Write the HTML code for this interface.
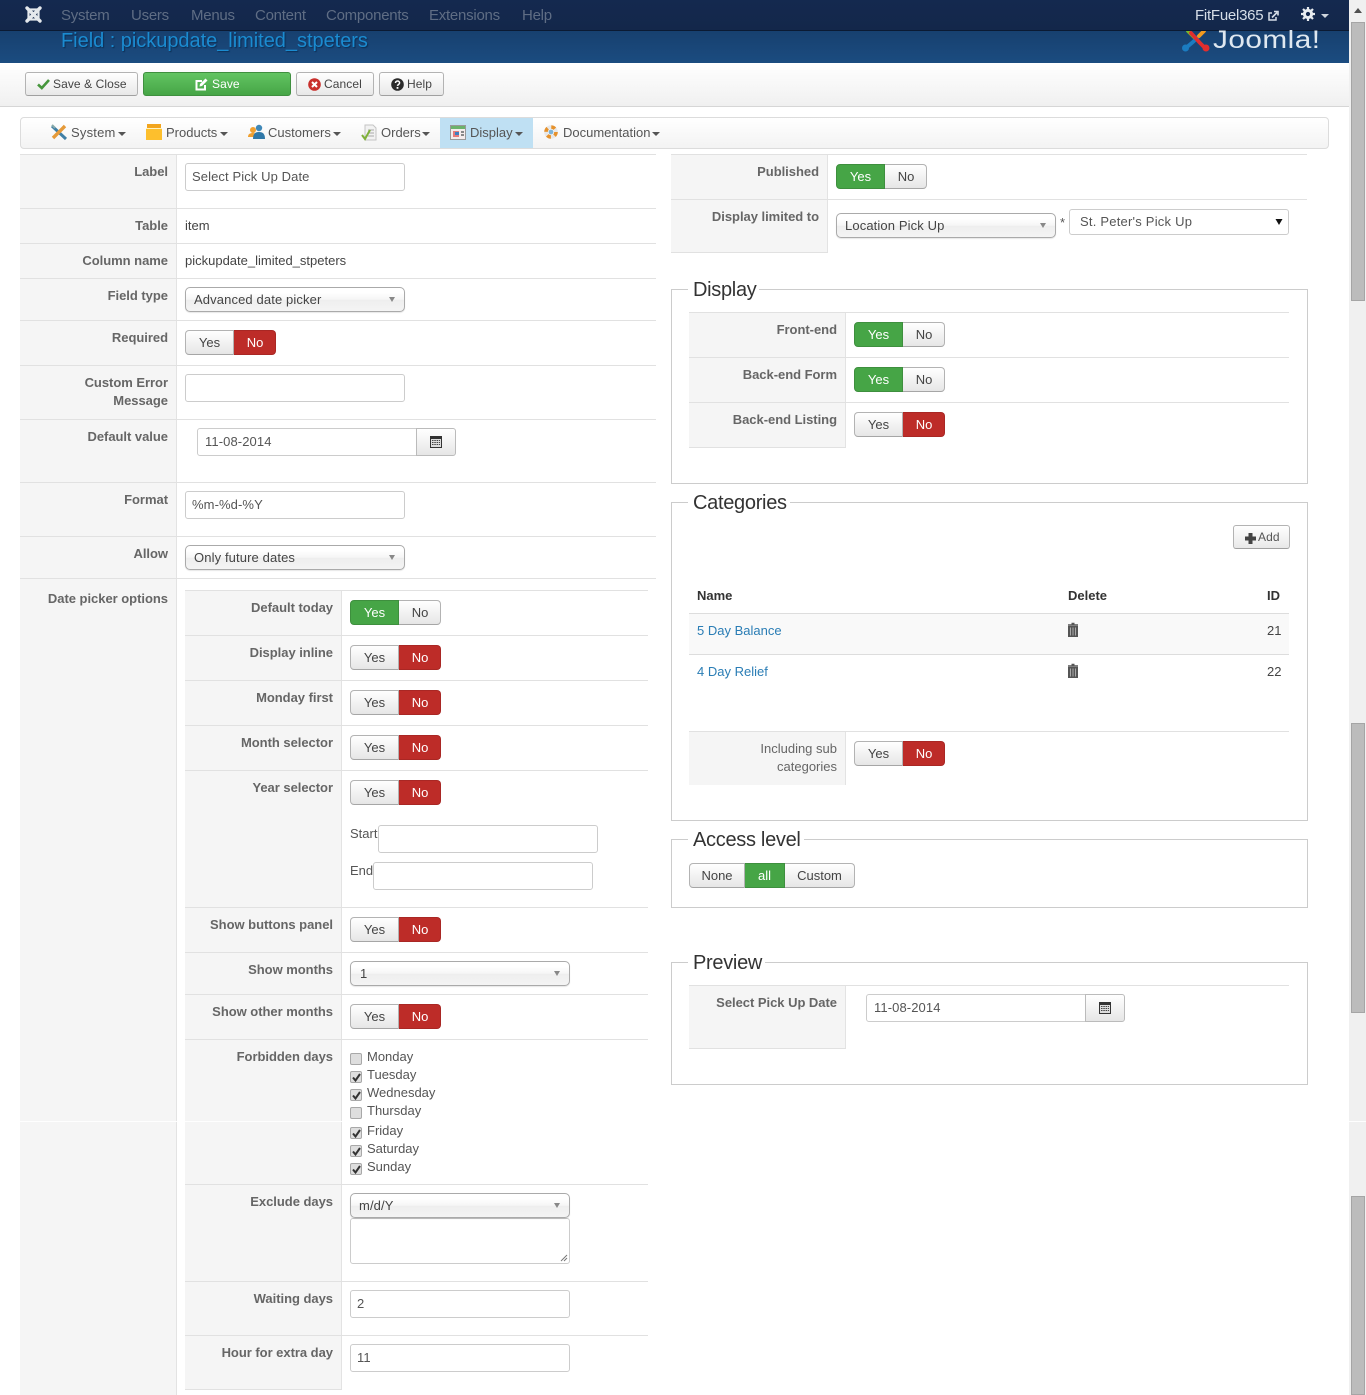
<!DOCTYPE html>
<html lang="en"><head><meta charset="utf-8"><title>Field : pickupdate_limited_stpeters</title>
<style>
html,body{margin:0;padding:0;background:#fff}
body{position:relative;width:1366px;height:1395px;overflow:hidden;font:13px/18px "Liberation Sans",Arial,sans-serif;color:#555}
div,span,svg{box-sizing:border-box}
.a{position:absolute}
.t{position:absolute;white-space:nowrap;line-height:18px;margin-top:1px}
.lb{position:absolute;text-align:right;font-weight:bold;color:#666;line-height:18px;white-space:nowrap;margin-top:1px;letter-spacing:-.03px}
.l1{left:20px;width:148px}.l2{left:185px;width:148px}.l3{left:671px;width:148px}.l4{left:689px;width:148px}
.hl{position:absolute;height:1px;background:#e1e1e1}
.side{position:absolute;background:#f5f5f5;border-right:1px solid #e3e3e3}
.in{position:absolute;height:28px;width:220px;background:#fff;border:1px solid #ccc;border-radius:3px;color:#555;padding:4px 6px;line-height:18px;white-space:nowrap;letter-spacing:.1px}
.sel{position:absolute;height:25px;width:220px;border:1px solid #aaa;border-radius:5px;background:linear-gradient(#fff 20%,#f6f6f6 50%,#eee 52%,#f4f4f4);color:#444;padding:3px 8px;line-height:18px;box-shadow:0 1px 1px rgba(0,0,0,.1);letter-spacing:.12px}
.sel:after{content:"";position:absolute;right:9px;top:9px;border:3px solid transparent;border-top:5px solid #888;border-bottom:0}
.bg{position:absolute;height:25px;display:flex}
.b{display:block;height:25px;line-height:23px;text-align:center;border:1px solid #b3b3b3;background:linear-gradient(#fff,#e6e6e6);color:#444;border-bottom-color:#a6a6a6}
.b:first-child{border-radius:4px 0 0 4px}.b:last-child{border-radius:0 4px 4px 0}
.b+.b{border-left:0}
.b.g{background:#46a546;color:#fff;border-color:#3e8f3e}
.b.r{background:#bd2c28;color:#fff;border-color:#a92724}
.w1{width:49px}.w2{width:42px;padding-left:1px}
.tb{position:absolute;top:72px;height:24px;font-size:12px;line-height:23px;color:#444;border:1px solid #b3b3b3;border-bottom-color:#a0a0a0;border-radius:3px;background:linear-gradient(#fff,#e8e8e8);letter-spacing:.08px}
.tb svg,.tb span{position:absolute}
.nav{position:absolute;top:7px;font-size:15px;line-height:18px;color:#5f6d84;white-space:nowrap;letter-spacing:-.25px}
.mi{position:absolute;top:124px;line-height:18px;color:#555;white-space:nowrap}
.car{position:absolute;top:132px;width:0;height:0;border:4px solid transparent;border-top:4px solid #555;border-bottom:0}
.fs{position:absolute;left:671px;width:637px;border:1px solid #ccc}
.lg{position:absolute;left:688px;background:#fff;font-size:20px;line-height:24px;color:#333;padding:0 3px 0 5px;white-space:nowrap;letter-spacing:-.3px;margin-top:1px}
.cal{position:absolute;height:28px;width:40px;border:1px solid #bbb;border-radius:0 3px 3px 0;background:linear-gradient(#fff,#e6e6e6)}
.cb{position:absolute;left:350px;width:12px;height:12px;background:#dedede;border:1px solid #a8a8a8;border-radius:2px}
.link{color:#2a7db5}
.th{position:absolute;left:1351px;width:14px;background:#bcbcbc;border:1px solid #a5a5a5}
</style></head><body>

<!-- header -->
<div class="a" style="left:0;top:31px;width:1349px;height:32px;background:linear-gradient(#17406f,#1b4c80)"></div>
<div class="t" style="left:61px;top:28px;font-size:20px;line-height:24px;color:#1b8bd0;text-shadow:1px 1px 1px #0c2f55;letter-spacing:-.03px">Field : pickupdate_limited_stpeters</div>
<div class="a" style="left:0;top:0;width:1349px;height:31px;background:linear-gradient(#14294f,#13274a);border-bottom:1px solid #0b1a33"></div>
<svg class="a" style="left:24px;top:5px" width="19" height="19" viewBox="0 0 19 19"><g fill="none" stroke="#e4e8ec" stroke-width="3.4" stroke-linecap="round"><path d="M3 3 L16 16M16 3 L3 16"/></g><rect x="4.5" y="4.5" width="10" height="10" fill="none" stroke="#e4e8ec" stroke-width="2.2"/></svg>
<div class="nav" style="left:61px">System</div>
<div class="nav" style="left:131px">Users</div>
<div class="nav" style="left:191px">Menus</div>
<div class="nav" style="left:255px">Content</div>
<div class="nav" style="left:326px">Components</div>
<div class="nav" style="left:429px">Extensions</div>
<div class="nav" style="left:522px">Help</div>
<div class="nav" style="left:1195px;color:#d6dee8">FitFuel365</div>
<svg class="a" style="left:1267px;top:10px" width="12" height="12" viewBox="0 0 12 12"><path d="M9 7v3H2V3h3" fill="none" stroke="#d6dee8" stroke-width="1.5"/><path d="M5 7.5 10 2.5M7 1.5h4v4" fill="none" stroke="#d6dee8" stroke-width="1.6"/></svg>
<svg class="a" style="left:1301px;top:7px" width="14" height="14" viewBox="0 0 14 14"><circle cx="7" cy="7" r="3.6" fill="none" stroke="#e8ecf0" stroke-width="3"/><path d="M7 0v3M7 11v3M0 7h3M11 7h3M2 2l2 2M10 10l2 2M12 2l-2 2M4 10l-2 2" stroke="#e8ecf0" stroke-width="2.2"/></svg>
<div class="a" style="left:1321px;top:14px;border:4px solid transparent;border-top:4px solid #cfd6de;border-bottom:0"></div>
<svg class="a" style="left:1181px;top:31px" width="30" height="21" viewBox="0 0 30 21"><g fill="none" stroke-width="3.8" stroke-linecap="round"><path d="M7 0 L15 8" stroke="#7ab829"/><path d="M20 3 L12 11 L6 16" stroke="#1b7cc1"/><path d="M23 0 L18 5" stroke="#f39a1e"/><path d="M10 2 L19 12 L24 17" stroke="#e22e2e"/></g><circle cx="4.500" cy="17" r="3.500" fill="#1b7cc1"/><circle cx="25" cy="17" r="3.500" fill="#e22e2e"/></svg>
<div class="t" style="left:1213px;top:26px;font-size:25px;line-height:26px;color:#dfe8f0;letter-spacing:.4px;transform-origin:0 50%;transform:scaleX(1.19);font-weight:normal">Joomla!</div>

<!-- toolbar -->
<div class="a" style="left:0;top:63px;width:1349px;height:44px;background:linear-gradient(#fff,#f0f0f0);border-bottom:1px solid #d6d6d6"></div>
<div class="tb" style="left:25px;width:113px"><svg style="left:11px;top:5px" width="13" height="12" viewBox="0 0 13 12"><path d="M1 6.5 4.8 10 12 2" fill="none" stroke="#46963c" stroke-width="2.6"/></svg><span style="left:27px;top:0;white-space:nowrap">Save &amp; Close</span></div>
<div class="tb" style="left:143px;width:148px;background:linear-gradient(#62c462,#46a546);border-color:#3f8f3f;color:#fff"><svg style="left:51px;top:5px" width="13" height="13" viewBox="0 0 13 13"><path d="M10 7v4.500H1.500V3H7" fill="none" stroke="#fff" stroke-width="2"/><path d="M4.500 8.500 5 6l5.500-5.500 2 2L7 8z" fill="#fff"/></svg><span style="left:68px;top:0;font-weight:normal">Save</span></div>
<div class="tb" style="left:296px;width:78px"><svg style="left:11px;top:5px" width="13" height="13" viewBox="0 0 13 13"><circle cx="6.500" cy="6.500" r="6.300" fill="#c9302c"/><path d="M4 4l5 5M9 4l-5 5" stroke="#fff" stroke-width="2"/></svg><span style="left:27px;top:0">Cancel</span></div>
<div class="tb" style="left:379px;width:65px"><svg style="left:11px;top:5px" width="13" height="13" viewBox="0 0 13 13"><circle cx="6.500" cy="6.500" r="6.300" fill="#2b2b2b"/><path d="M4.500 5c0-1.200.9-2 2-2s2.100.8 2.100 1.900c0 1.600-2.100 1.500-2.100 3" fill="none" stroke="#fff" stroke-width="1.500"/><rect x="5.600" y="9" width="1.800" height="1.800" fill="#fff"/></svg><span style="left:27px;top:0">Help</span></div>

<!-- menu -->
<div class="a" style="left:20px;top:117px;width:1309px;height:32px;background:linear-gradient(#fff,#f3f3f3);border:1px solid #dcdcdc;border-radius:4px"></div>
<div class="a" style="left:440px;top:118px;width:93px;height:30px;background:#bfe0f3"></div>
<svg class="a" style="left:50px;top:124px" width="18" height="17" viewBox="0 0 18 17"><path d="M2 2 16 15" stroke="#3f7fa6" stroke-width="3"/><path d="M15 2 3 14" stroke="#e59a3a" stroke-width="3.400"/><path d="M2 1l3 3" stroke="#8aa" stroke-width="2"/></svg>
<div class="mi" style="left:71px;letter-spacing:.2px">System</div><div class="car" style="left:118px"></div>
<svg class="a" style="left:146px;top:124px" width="16" height="17" viewBox="0 0 16 17"><rect x="1" y="0" width="14" height="5" fill="#f2a51e"/><rect y="4" width="16" height="12" fill="#fdbf2d"/><rect y="4" width="16" height="1" fill="#fff2c0"/></svg>
<div class="mi" style="left:166px">Products</div><div class="car" style="left:220px"></div>
<svg class="a" style="left:248px;top:124px" width="17" height="17" viewBox="0 0 17 17"><circle cx="5" cy="6" r="3" fill="#f0a030"/><path d="M0 13c0-3 2-4 5-4s4 2 4 4z" fill="#f0a030"/><circle cx="11" cy="4" r="3.200" fill="#3f88b8"/><path d="M5 15c0-5 2-7 6-7s6 2 6 7z" fill="#2f78a8"/></svg>
<div class="mi" style="left:268px">Customers</div><div class="car" style="left:333px"></div>
<svg class="a" style="left:361px;top:124px" width="16" height="17" viewBox="0 0 16 17"><path d="M4 1h8l3 3v12H4z" fill="#f2f2f2" stroke="#c4c4c4"/><path d="M7 6h6M7 9h6M7 12h6" stroke="#aaa"/><path d="M1 11l3 4 5-9" fill="none" stroke="#7fb13a" stroke-width="2"/></svg>
<div class="mi" style="left:381px">Orders</div><div class="car" style="left:422px"></div>
<svg class="a" style="left:450px;top:125px" width="16" height="15" viewBox="0 0 16 15"><rect x=".5" y=".5" width="15" height="14" fill="#f4ecec" stroke="#999"/><rect x="1" y="1" width="14" height="3" fill="#6bb26b"/><rect x="3" y="6" width="6" height="6" fill="#e57a7a"/><rect x="5" y="7" width="4" height="3" fill="#3f7fc1"/><rect x="11" y="6" width="3" height="2" fill="#888"/><rect x="11" y="9" width="3" height="2" fill="#888"/></svg>
<div class="mi" style="left:470px">Display</div><div class="car" style="left:515px"></div>
<svg class="a" style="left:544px;top:125px" width="14" height="14" viewBox="0 0 14 14"><circle cx="7" cy="7" r="5" fill="none" stroke="#e8e8e8" stroke-width="3.600"/><circle cx="7" cy="7" r="5" fill="none" stroke="#e6922c" stroke-width="3.600" stroke-dasharray="4 3.900"/><circle cx="7" cy="7" r="2.400" fill="#7fb4d8"/></svg>
<div class="mi" style="left:563px">Documentation</div><div class="car" style="left:652px"></div>

<!-- LEFT -->
<div class="side" style="left:20px;top:154px;width:157px;height:1241px"></div>
<div class="hl" style="left:20px;top:154px;width:636px"></div>
<div class="hl" style="left:20px;top:208px;width:636px"></div>
<div class="hl" style="left:20px;top:243px;width:636px"></div>
<div class="hl" style="left:20px;top:278px;width:636px"></div>
<div class="hl" style="left:20px;top:320px;width:636px"></div>
<div class="hl" style="left:20px;top:365px;width:636px"></div>
<div class="hl" style="left:20px;top:419px;width:636px"></div>
<div class="hl" style="left:20px;top:482px;width:636px"></div>
<div class="hl" style="left:20px;top:536px;width:636px"></div>
<div class="hl" style="left:20px;top:578px;width:636px"></div>

<div class="lb l1" style="top:162px">Label</div>
<div class="in" style="left:185px;top:163px">Select Pick Up Date</div>
<div class="lb l1" style="top:216px">Table</div>
<div class="t" style="left:185px;top:216px;color:#444">item</div>
<div class="lb l1" style="top:251px">Column name</div>
<div class="t" style="left:185px;top:251px;color:#444">pickupdate_limited_stpeters</div>
<div class="lb l1" style="top:286px">Field type</div>
<div class="sel" style="left:185px;top:287px">Advanced date picker</div>
<div class="lb l1" style="top:328px">Required</div>
<div class="bg" style="left:185px;top:330px"><span class="b w1">Yes</span><span class="b w2 r">No</span></div>
<div class="lb l1" style="top:373px">Custom Error<br>Message</div>
<div class="in" style="left:185px;top:374px"></div>
<div class="lb l1" style="top:427px">Default value</div>
<div class="in" style="left:197px;top:428px;border-radius:3px 0 0 3px;padding-left:7px">11-08-2014</div>
<div class="cal" style="left:416px;top:428px"><svg class="a" style="left:13px;top:6px" width="12" height="13" viewBox="0 0 12 13"><rect x="0" y="1" width="12" height="12" fill="#333"/><rect x="1" y="4" width="10" height="8" fill="#ddd"/><path d="M2 5.500h8M2 7.500h8M2 9.500h8" stroke="#444" stroke-dasharray="1.500 .8"/></svg></div>
<div class="lb l1" style="top:490px">Format</div>
<div class="in" style="left:185px;top:491px">%m-%d-%Y</div>
<div class="lb l1" style="top:544px">Allow</div>
<div class="sel" style="left:185px;top:545px">Only future dates</div>
<div class="lb l1" style="top:589px">Date picker options</div>

<!-- nested -->
<div class="side" style="left:185px;top:590px;width:157px;height:800px"></div>
<div class="hl" style="left:185px;top:590px;width:463px"></div>
<div class="hl" style="left:185px;top:635px;width:463px"></div>
<div class="hl" style="left:185px;top:680px;width:463px"></div>
<div class="hl" style="left:185px;top:725px;width:463px"></div>
<div class="hl" style="left:185px;top:770px;width:463px"></div>
<div class="hl" style="left:185px;top:907px;width:463px"></div>
<div class="hl" style="left:185px;top:952px;width:463px"></div>
<div class="hl" style="left:185px;top:994px;width:463px"></div>
<div class="hl" style="left:185px;top:1039px;width:463px"></div>
<div class="hl" style="left:185px;top:1184px;width:463px"></div>
<div class="hl" style="left:185px;top:1281px;width:463px"></div>
<div class="hl" style="left:185px;top:1335px;width:463px"></div>
<div class="hl" style="left:185px;top:1389px;width:157px"></div>

<div class="lb l2" style="top:598px">Default today</div>
<div class="bg" style="left:350px;top:600px"><span class="b w1 g">Yes</span><span class="b w2">No</span></div>
<div class="lb l2" style="top:643px">Display inline</div>
<div class="bg" style="left:350px;top:645px"><span class="b w1">Yes</span><span class="b w2 r">No</span></div>
<div class="lb l2" style="top:688px">Monday first</div>
<div class="bg" style="left:350px;top:690px"><span class="b w1">Yes</span><span class="b w2 r">No</span></div>
<div class="lb l2" style="top:733px">Month selector</div>
<div class="bg" style="left:350px;top:735px"><span class="b w1">Yes</span><span class="b w2 r">No</span></div>
<div class="lb l2" style="top:778px">Year selector</div>
<div class="bg" style="left:350px;top:780px"><span class="b w1">Yes</span><span class="b w2 r">No</span></div>
<div class="t" style="left:350px;top:824px">Start</div>
<div class="in" style="left:378px;top:825px"></div>
<div class="t" style="left:350px;top:861px">End</div>
<div class="in" style="left:373px;top:862px"></div>
<div class="lb l2" style="top:915px">Show buttons panel</div>
<div class="bg" style="left:350px;top:917px"><span class="b w1">Yes</span><span class="b w2 r">No</span></div>
<div class="lb l2" style="top:960px">Show months</div>
<div class="sel" style="left:350px;top:961px;padding-left:9px">1</div>
<div class="lb l2" style="top:1002px">Show other months</div>
<div class="bg" style="left:350px;top:1004px"><span class="b w1">Yes</span><span class="b w2 r">No</span></div>
<div class="lb l2" style="top:1047px">Forbidden days</div>

<div class="cb" style="top:1053px"></div><div class="t" style="left:367px;top:1047px">Monday</div>
<div class="cb" style="top:1071px"><svg class="a" style="left:1px;top:1px" width="9" height="9" viewBox="0 0 9 9"><path d="M1 4.500 3.500 7.500 8 1" fill="none" stroke="#333" stroke-width="2"/></svg></div><div class="t" style="left:367px;top:1065px">Tuesday</div>
<div class="cb" style="top:1089px"><svg class="a" style="left:1px;top:1px" width="9" height="9" viewBox="0 0 9 9"><path d="M1 4.500 3.500 7.500 8 1" fill="none" stroke="#333" stroke-width="2"/></svg></div><div class="t" style="left:367px;top:1083px">Wednesday</div>
<div class="cb" style="top:1107px"></div><div class="t" style="left:367px;top:1101px">Thursday</div>
<div class="cb" style="top:1127px"><svg class="a" style="left:1px;top:1px" width="9" height="9" viewBox="0 0 9 9"><path d="M1 4.500 3.500 7.500 8 1" fill="none" stroke="#333" stroke-width="2"/></svg></div><div class="t" style="left:367px;top:1121px">Friday</div>
<div class="cb" style="top:1145px"><svg class="a" style="left:1px;top:1px" width="9" height="9" viewBox="0 0 9 9"><path d="M1 4.500 3.500 7.500 8 1" fill="none" stroke="#333" stroke-width="2"/></svg></div><div class="t" style="left:367px;top:1139px">Saturday</div>
<div class="cb" style="top:1163px"><svg class="a" style="left:1px;top:1px" width="9" height="9" viewBox="0 0 9 9"><path d="M1 4.500 3.500 7.500 8 1" fill="none" stroke="#333" stroke-width="2"/></svg></div><div class="t" style="left:367px;top:1157px">Sunday</div>

<div class="lb l2" style="top:1192px">Exclude days</div>
<div class="in" style="left:350px;top:1218px;height:46px"><svg class="a" style="right:1px;bottom:1px" width="8" height="8" viewBox="0 0 8 8"><path d="M1 7 7 1M4 7 7 4" stroke="#777"/></svg></div>
<div class="sel" style="left:350px;top:1193px">m/d/Y</div>
<div class="lb l2" style="top:1289px">Waiting days</div>
<div class="in" style="left:350px;top:1290px">2</div>
<div class="lb l2" style="top:1343px">Hour for extra day</div>
<div class="in" style="left:350px;top:1344px">11</div>

<!-- RIGHT -->
<div class="side" style="left:671px;top:154px;width:157px;height:99px"></div>
<div class="hl" style="left:671px;top:154px;width:636px"></div>
<div class="hl" style="left:671px;top:199px;width:636px"></div>
<div class="hl" style="left:671px;top:252px;width:157px"></div>
<div class="lb l3" style="top:162px">Published</div>
<div class="bg" style="left:836px;top:164px"><span class="b w1 g">Yes</span><span class="b w2">No</span></div>
<div class="lb l3" style="top:207px">Display limited to</div>
<div class="sel" style="left:836px;top:213px">Location Pick Up</div>
<div class="t" style="left:1060px;top:213px">*</div>
<div class="a" style="left:1069px;top:209px;width:220px;height:26px;border:1px solid #ccc;border-radius:3px;background:#fff;padding:3px 10px;color:#555;line-height:18px;letter-spacing:.22px">St. Peter's Pick Up<svg class="a" style="left:205px;top:8px" width="8" height="8" viewBox="0 0 8 8"><path d="M.5 1h7L4 7z" fill="#111"/></svg></div>

<!-- Display -->
<div class="fs" style="top:289px;height:195px"></div>
<div class="lg" style="top:277px">Display</div>
<div class="side" style="left:689px;top:312px;width:157px;height:136px"></div>
<div class="hl" style="left:689px;top:312px;width:600px"></div>
<div class="hl" style="left:689px;top:357px;width:600px"></div>
<div class="hl" style="left:689px;top:402px;width:600px"></div>
<div class="hl" style="left:689px;top:447px;width:157px"></div>
<div class="lb l4" style="top:320px">Front-end</div>
<div class="bg" style="left:854px;top:322px"><span class="b w1 g">Yes</span><span class="b w2">No</span></div>
<div class="lb l4" style="top:365px">Back-end Form</div>
<div class="bg" style="left:854px;top:367px"><span class="b w1 g">Yes</span><span class="b w2">No</span></div>
<div class="lb l4" style="top:410px">Back-end Listing</div>
<div class="bg" style="left:854px;top:412px"><span class="b w1">Yes</span><span class="b w2 r">No</span></div>

<!-- Categories -->
<div class="fs" style="top:502px;height:319px"></div>
<div class="lg" style="top:490px">Categories</div>
<div class="tb" style="left:1233px;top:525px;width:57px;color:#555"><svg style="left:10px;top:6px" width="13" height="13" viewBox="0 0 13 13"><path d="M6.500 1v11M1 6.500h11" stroke="#444" stroke-width="4"/></svg><span style="left:24px;top:0">Add</span></div>
<div class="t" style="left:697px;top:586px;font-weight:bold;color:#333">Name</div>
<div class="t" style="left:1068px;top:586px;font-weight:bold;color:#333">Delete</div>
<div class="t" style="left:1267px;top:586px;font-weight:bold;color:#333">ID</div>
<div class="a" style="left:689px;top:613px;width:600px;height:42px;background:#f9f9f9;border-top:1px solid #ddd;border-bottom:1px solid #ddd"></div>
<div class="t link" style="left:697px;top:621px">5 Day Balance</div>
<svg class="a" style="left:1068px;top:622px" width="10" height="15" viewBox="0 0 10 15"><path d="M3.500 1.500h3M0 3h10" stroke="#555" stroke-width="1.500" fill="none"/><rect x="0" y="4" width="10" height="11" fill="#555"/><path d="M2.500 5.500v8M5 5.500v8M7.500 5.500v8" stroke="#aaa"/></svg>
<div class="t" style="left:1267px;top:621px;color:#444">21</div>
<div class="t link" style="left:697px;top:662px">4 Day Relief</div>
<svg class="a" style="left:1068px;top:663px" width="10" height="15" viewBox="0 0 10 15"><path d="M3.500 1.500h3M0 3h10" stroke="#555" stroke-width="1.500" fill="none"/><rect x="0" y="4" width="10" height="11" fill="#555"/><path d="M2.500 5.500v8M5 5.500v8M7.500 5.500v8" stroke="#aaa"/></svg>
<div class="t" style="left:1267px;top:662px;color:#444">22</div>
<div class="side" style="left:689px;top:731px;width:157px;height:54px"></div>
<div class="hl" style="left:689px;top:731px;width:600px"></div>
<div class="a" style="left:689px;top:740px;width:148px;text-align:right;color:#666;line-height:18px">Including sub<br>categories</div>
<div class="bg" style="left:854px;top:741px"><span class="b w1">Yes</span><span class="b w2 r">No</span></div>

<!-- Access -->
<div class="fs" style="top:839px;height:69px"></div>
<div class="lg" style="top:827px">Access level</div>
<div class="bg" style="left:689px;top:863px"><span class="b" style="width:56px">None</span><span class="b g" style="width:40px">all</span><span class="b" style="width:70px">Custom</span></div>

<!-- Preview -->
<div class="fs" style="top:962px;height:123px"></div>
<div class="lg" style="top:950px">Preview</div>
<div class="side" style="left:689px;top:985px;width:157px;height:64px"></div>
<div class="hl" style="left:689px;top:985px;width:600px"></div>
<div class="hl" style="left:689px;top:1048px;width:157px"></div>
<div class="lb l4" style="top:993px">Select Pick Up Date</div>
<div class="in" style="left:866px;top:994px;border-radius:3px 0 0 3px;padding-left:7px">11-08-2014</div>
<div class="cal" style="left:1085px;top:994px"><svg class="a" style="left:13px;top:6px" width="12" height="13" viewBox="0 0 12 13"><rect x="0" y="1" width="12" height="12" fill="#333"/><rect x="1" y="4" width="10" height="8" fill="#ddd"/><path d="M2 5.500h8M2 7.500h8M2 9.500h8" stroke="#444" stroke-dasharray="1.500 .8"/></svg></div>

<!-- scrollbar -->
<div class="a" style="left:1349px;top:0;width:17px;height:1395px;background:#f0f0f0"></div>
<div class="a" style="left:1354px;top:8px;border:4px solid transparent;border-bottom:5px solid #505050;border-top:0"></div>
<div class="th" style="top:22px;height:279px"></div>
<div class="th" style="top:723px;height:290px"></div>
<div class="th" style="top:1196px;height:199px"></div>
<div class="a" style="left:0;top:1121px;width:1366px;height:1px;background:rgba(255,255,255,.9)"></div>
</body></html>
